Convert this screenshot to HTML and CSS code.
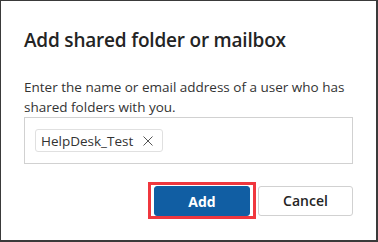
FILE: index.html
```html
<!DOCTYPE html>
<html lang="en">
<head>
  <meta charset="UTF-8" />
  <title>Add shared folder or mailbox</title>
  <link rel="stylesheet" href="styles.css">
</head>
<body>
  <div class="dialogo" role="dialog" aria-labelledby="titulo">
    <h1 class="titulo" id="titulo">Add shared folder or mailbox</h1>
    <p class="descricao">Enter the name or email address of a user who has shared folders with you.</p>

    <div class="campo">
      <span class="chip">
        <span class="chip-texto">HelpDesk_Test</span>
        <svg class="chip-x" width="10" height="10" viewBox="0 0 10 10" aria-hidden="true">
          <path d="M0.5 0.5 L9.5 9.5 M9.5 0.5 L0.5 9.5" stroke="#555" stroke-width="1" fill="none" />
        </svg>
      </span>
    </div>

    <div class="acoes">
      <div class="destaque">
        <button class="botao botao-primario">Add</button>
      </div>
      <button class="botao botao-secundario">Cancel</button>
    </div>
  </div>
</body>
</html>
```

FILE: styles.css
```css
* {
  margin: 0; padding: 0; box-sizing: border-box;
}
body {
  width: 378px;
  height: 242px;
  background: #fff;
  font-family: 'Open Sans', 'Noto Sans', sans-serif;
  color: #242424;
}

.dialogo {
  width: 378px;
  height: 242px;
  border: 2px solid #3a3a3a;
  border-top-width: 1px;
  border-left-width: 1px;
  padding: 0 23px 0 23px;
  display: flex;
  flex-direction: column;
}

.titulo {
  font-size: 19px;
  font-weight: 600;
  line-height: 26px;
  margin-top: 26px;
  letter-spacing: -0.2px;
}

.descricao {
  font-size: 13.5px;
  line-height: 20px;
  margin-top: 24px;
  color: #333;
}

.campo {
  margin-top: 0;
  height: 47px;
  border: 1px solid #d1d1d1;
  display: flex;
  align-items: center;
  padding-left: 10px;
}

.chip {
  display: inline-flex;
  align-items: center;
  height: 23px;
  padding: 0 9px 0 5px;
  border: 1px solid #e0e0e0;
  border-radius: 3px;
  font-size: 13.5px;
  color: #333;
}

.chip-x {
  margin-left: 10px;
}

.acoes {
  display: flex;
  justify-content: flex-end;
  align-items: center;
  gap: 2px;
  margin-top: 18px;
}

.destaque {
  border: 3px solid #f0373e;
  padding: 1px 3px 0;
}

.botao {
  height: 30px;
  font-family: inherit;
  font-size: 14px;
  border-radius: 3px;
  cursor: pointer;
}

.botao-primario {
  width: 96px;
  background: #115ea3;
  color: #fff;
  font-weight: 700;
  border: 1px solid #115ea3;
}

.botao-secundario {
  width: 95px;
  background: #fff;
  color: #242424;
  font-weight: 600;
  border: 1px solid #d1d1d1;
}
```
